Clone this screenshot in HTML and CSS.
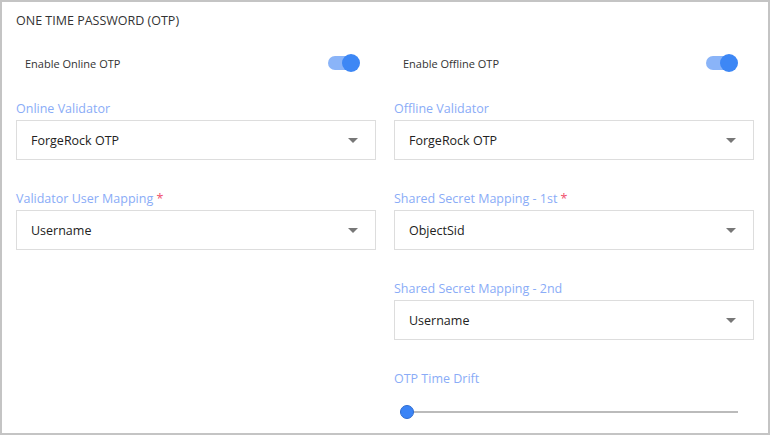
FILE: index.html
```html
<!DOCTYPE html>
<html>
  <head>
    <meta charset="UTF-8">
    <title>One Time Password (OTP)</title>
    <link rel="stylesheet" href="styles.css">
  </head>
  <body>
    <section class="panel">
      <h2 class="panel-title">ONE TIME PASSWORD (OTP)</h2>

      <div class="columns">
        <!-- online side -->
        <div class="col">
          <div class="toggle-row">
            <span class="toggle-label">Enable Online OTP</span>
            <span class="toggle on"><span class="knob"></span></span>
          </div>

          <div class="field">
            <label class="field-label">Online Validator</label>
            <div class="dropdown">
              <span class="value">ForgeRock OTP</span>
              <span class="caret"></span>
            </div>
          </div>

          <div class="field">
            <label class="field-label">Validator User Mapping <span class="req">*</span></label>
            <div class="dropdown">
              <span class="value">Username</span>
              <span class="caret"></span>
            </div>
          </div>
        </div>

        <!-- offline side -->
        <div class="col">
          <div class="toggle-row">
            <span class="toggle-label">Enable Offline OTP</span>
            <span class="toggle on"><span class="knob"></span></span>
          </div>

          <div class="field">
            <label class="field-label">Offline Validator</label>
            <div class="dropdown">
              <span class="value">ForgeRock OTP</span>
              <span class="caret"></span>
            </div>
          </div>

          <div class="field">
            <label class="field-label">Shared Secret Mapping - 1st <span class="req">*</span></label>
            <div class="dropdown">
              <span class="value">ObjectSid</span>
              <span class="caret"></span>
            </div>
          </div>

          <div class="field">
            <label class="field-label">Shared Secret Mapping - 2nd</label>
            <div class="dropdown">
              <span class="value">Username</span>
              <span class="caret"></span>
            </div>
          </div>

          <div class="field">
            <label class="field-label">OTP Time Drift</label>
            <div class="slider">
              <span class="slider-track"></span>
              <span class="slider-thumb"></span>
            </div>
          </div>
        </div>
      </div>
    </section>
  </body>
</html>
```

FILE: styles.css
```css
body{
  margin:0;
  background:#ffffff;
  font-family:"Open Sans", "Noto Sans", sans-serif;
}
.panel{
  box-sizing:border-box;
  width:770px;
  height:435px;
  border:2px solid #c4c4c4;
  padding:11px 14px 0 14px;
  overflow:hidden;
}
.panel-title{
  margin:0;
  font-size:12.5px;
  line-height:16px;
  font-weight:400;
  color:#333333;
}
.columns{
  display:grid;
  grid-template-columns:360px 360px;
  column-gap:18px;
  margin-top:21px;
}
.col{
  display:flex;
  flex-direction:column;
}

/* switch rows */
.toggle-row{
  display:flex;
  align-items:center;
  justify-content:space-between;
  height:26px;
  padding:0 16px 0 9px;
}
.toggle-label{
  font-size:11px;
  color:#333333;
}
.toggle{
  position:relative;
  width:32px;
  height:18px;
}
.toggle::before{
  content:"";
  position:absolute;
  left:0;
  top:2px;
  width:30px;
  height:14px;
  border-radius:7px;
  background:#8ab4f8;
}
.toggle .knob{
  position:absolute;
  right:0;
  top:0;
  width:18px;
  height:18px;
  border-radius:50%;
  background:#3d87f5;
}

/* labelled fields */
.field{
  margin-top:30px;
}
.toggle-row + .field{
  margin-top:24px;
}
.field-label{
  display:block;
  font-size:12.5px;
  line-height:18px;
  color:#8aacf7;
  margin-bottom:2px;
}
.req{
  color:#f0506e;
}
.dropdown{
  box-sizing:border-box;
  height:40px;
  border:1px solid #dddddd;
  display:flex;
  align-items:center;
  justify-content:space-between;
  padding:0 17px 0 14px;
}
.dropdown .value{
  font-size:12.5px;
  color:#222222;
}
.caret{
  width:0;
  height:0;
  border-left:5px solid transparent;
  border-right:5px solid transparent;
  border-top:5px solid #777777;
}

/* range slider */
.slider{
  position:relative;
  height:14px;
  margin:17px 16px 0 6px;
}
.slider-track{
  position:absolute;
  left:0;
  right:0;
  top:6px;
  height:2px;
  background:#bbbbbb;
}
.slider-thumb{
  position:absolute;
  left:0;
  top:0;
  box-sizing:border-box;
  width:14px;
  height:14px;
  border-radius:50%;
  background:#3b84f6;
  border:1px solid #2e6cd0;
}
```
